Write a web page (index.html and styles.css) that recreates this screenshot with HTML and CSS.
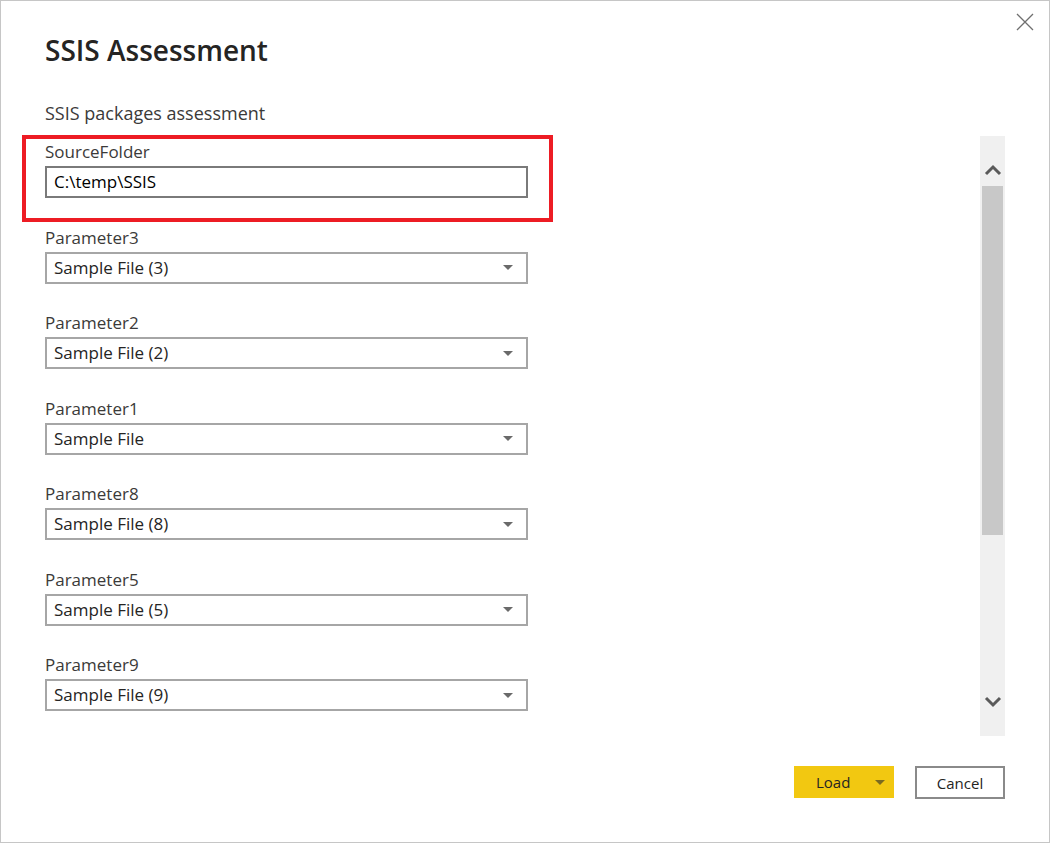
FILE: index.html
```html
<!DOCTYPE html>
<html>
<head>
<meta charset="utf-8">
<link rel="stylesheet" href="styles.css">
</head>
<body>
<div class="dialog">
  <button class="close" aria-label="Close">
    <svg width="18" height="18" viewBox="0 0 18 18"><path d="M1 1L17 17M17 1L1 17" stroke="#6f6f6f" stroke-width="1.3" fill="none"/></svg>
  </button>
  <div class="header">
    <h1 class="title">SSIS Assessment</h1>
    <div class="subtitle">SSIS packages assessment</div>
  </div>
  <div class="content">
    <div class="form">
      <div class="highlight"></div>
      <div class="field">
        <div class="label">SourceFolder</div>
        <div class="input">C:\temp\SSIS</div>
      </div>
      <div class="field">
        <div class="label">Parameter3</div>
        <div class="select"><span>Sample File (3)</span><i class="caret"></i></div>
      </div>
      <div class="field">
        <div class="label">Parameter2</div>
        <div class="select"><span>Sample File (2)</span><i class="caret"></i></div>
      </div>
      <div class="field">
        <div class="label">Parameter1</div>
        <div class="select"><span>Sample File</span><i class="caret"></i></div>
      </div>
      <div class="field">
        <div class="label">Parameter8</div>
        <div class="select"><span>Sample File (8)</span><i class="caret"></i></div>
      </div>
      <div class="field">
        <div class="label">Parameter5</div>
        <div class="select"><span>Sample File (5)</span><i class="caret"></i></div>
      </div>
      <div class="field">
        <div class="label">Parameter9</div>
        <div class="select"><span>Sample File (9)</span><i class="caret"></i></div>
      </div>
    </div>
    <div class="scrollbar">
      <div class="arrow up">
        <svg width="18" height="12" viewBox="0 0 18 12"><path d="M2 10L9 3L16 10" stroke="#5a5a5a" stroke-width="3" fill="none"/></svg>
      </div>
      <div class="thumb"></div>
      <div class="track-rest"></div>
      <div class="arrow down">
        <svg width="18" height="12" viewBox="0 0 18 12"><path d="M2 2L9 9L16 2" stroke="#5a5a5a" stroke-width="3" fill="none"/></svg>
      </div>
    </div>
  </div>
  <div class="footer">
    <button class="btn load"><span>Load</span><i class="caret dark"></i></button>
    <button class="btn cancel">Cancel</button>
  </div>
</div>
</body>
</html>
```
FILE: styles.css
```css
html, body {
  margin: 0;
  padding: 0;
  background: #ffffff;
}
body {
  font-family: "Open Sans", "Noto Sans", sans-serif;
  color: #252423;
}
.dialog {
  position: relative;
  width: 1048px;
  height: 841px;
  border: 1px solid #c6c6c6;
  display: flex;
  flex-direction: column;
}
.close {
  position: absolute;
  top: 11px;
  right: 14px;
  width: 20px;
  height: 20px;
  padding: 0;
  border: 0;
  background: none;
  display: flex;
  align-items: center;
  justify-content: center;
}
.header {
  padding: 31px 0 0 44px;
  height: 104px;
  box-sizing: border-box;
}
.title {
  margin: 0;
  font-size: 28px;
  line-height: 36px;
  font-weight: 600;
  color: #252423;
  letter-spacing: 0;
}
.subtitle {
  margin-top: 33px;
  font-size: 18px;
  line-height: 24px;
  color: #3b3a39;
}
.content {
  display: flex;
  margin-top: 31px;
  height: 600px;
}
.form {
  position: relative;
  flex: 1;
  padding: 5px 0 0 44px;
}
.highlight {
  position: absolute;
  left: 21px;
  top: -1px;
  width: 523px;
  height: 79px;
  border: 4px solid #ed1c24;
}
.field {
  width: 483px;
  margin-bottom: 28.5px;
}
.label {
  font-size: 17px;
  line-height: 22px;
  color: #3b3a39;
  margin-bottom: 3px;
}
.input, .select {
  box-sizing: border-box;
  height: 32px;
  border: 2px solid #7a7a7a;
  padding: 0 7px;
  font-size: 17px;
  line-height: 28px;
  color: #000;
}
.select {
  border-color: #a6a6a6;
  display: flex;
  align-items: center;
  justify-content: space-between;
  color: #252423;
}
.select span {
  line-height: 28px;
}
.caret {
  width: 0;
  height: 0;
  border-left: 5px solid transparent;
  border-right: 5px solid transparent;
  border-top: 5px solid #6a6a6a;
  margin-right: 6px;
}
.scrollbar {
  width: 25px;
  margin-right: 44px;
  background: #f0f0f0;
  display: flex;
  flex-direction: column;
  align-items: center;
}
.arrow {
  height: 50px;
  width: 25px;
  display: flex;
  align-items: center;
  justify-content: center;
}
.arrow.up { padding-top: 18px; box-sizing: border-box; }
.arrow.down { padding-bottom: 18px; box-sizing: border-box; }
.thumb {
  width: 21px;
  height: 349px;
  background: #c8c8c8;
}
.track-rest {
  flex: 1;
}
.footer {
  display: flex;
  justify-content: flex-end;
  gap: 21px;
  padding: 30px 44px 0 0;
}
.btn {
  font-family: "Open Sans", "Noto Sans", sans-serif;
  font-size: 15px;
  height: 32px;
  box-sizing: border-box;
  color: #252423;
  padding: 0;
  cursor: pointer;
}
.load {
  width: 100px;
  background: #f2c811;
  border: 0;
  display: flex;
  align-items: center;
  padding-left: 22px;
}
.load span {
  flex: 1;
  text-align: left;
}
.load .caret {
  margin-right: 9px;
  border-top-color: #7a6a20;
}
.cancel {
  width: 90px;
  height: 33px;
  background: #fff;
  border: 2px solid #8a8a8a;
}
```
